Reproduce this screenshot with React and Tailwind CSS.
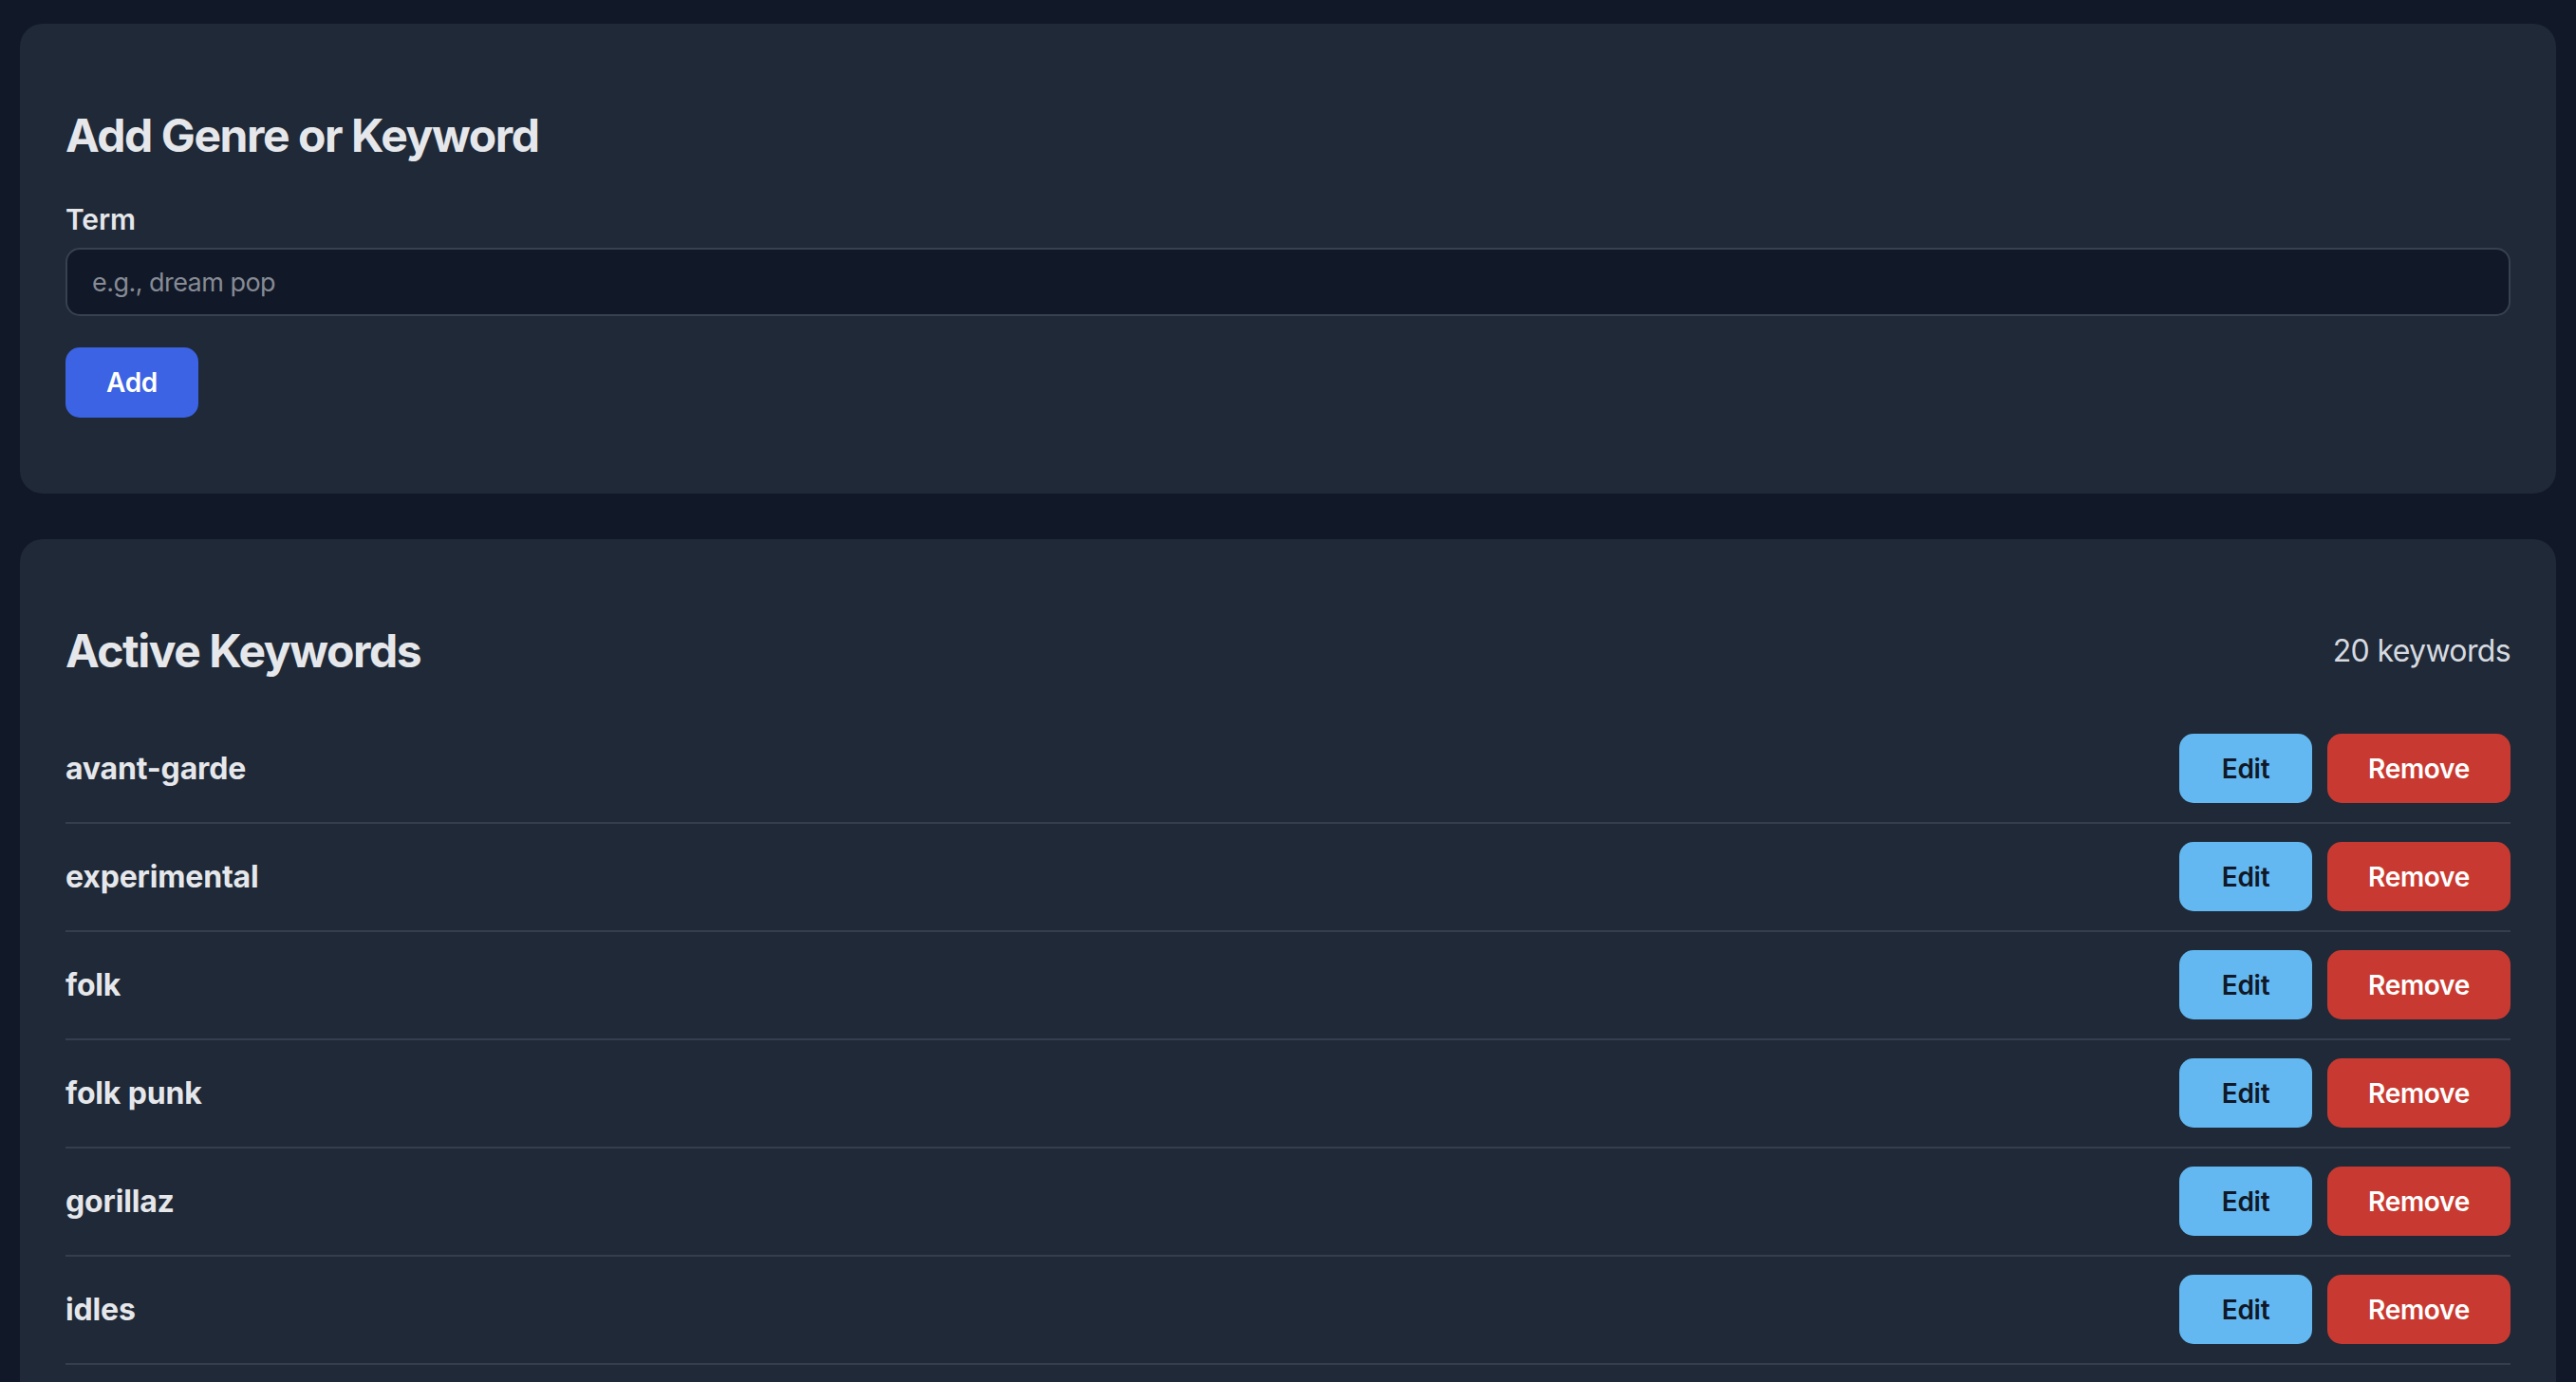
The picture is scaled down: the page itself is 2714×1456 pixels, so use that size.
import React from "react";

const keywords = [
  "avant-garde",
  "experimental",
  "folk",
  "folk punk",
  "gorillaz",
  "idles",
  "indie rock",
  "jazz",
  "krautrock",
  "lo-fi",
  "math rock",
  "noise rock",
  "post-punk",
  "post-rock",
  "psychedelic",
  "punk",
  "shoegaze",
  "slowcore",
  "synth-pop",
  "trip hop",
];

export default function App() {
  return (
    <div
      className="h-[1456px] overflow-hidden bg-[#111827] px-[21px] pt-[25px] flex flex-col gap-[48px]"
      style={{ fontFamily: "Inter, 'Noto Sans', sans-serif" }}
    >
      <section className="bg-[#1f2937] rounded-[24px] px-[48px] pt-[86px] pb-[80px] flex flex-col">
        <h2 className="text-[48px] leading-[64px] font-bold tracking-[-0.03em] text-[#e5e7eb]">
          Add Genre or Keyword
        </h2>
        <label className="mt-[36px] text-[30px] leading-[40px] font-semibold tracking-[-0.005em] text-[#e5e7eb]">
          Term
        </label>
        <input
          type="text"
          placeholder="e.g., dream pop"
          className="mt-[10px] h-[72px] w-full rounded-[15px] border-2 border-[#374151] bg-[#111827] px-[26px] text-[27px] tracking-[-0.02em] text-[#e5e7eb] placeholder:text-[#868b95] outline-none"
        />
        <button className="mt-[33px] h-[74px] w-[140px] rounded-[15px] bg-[#3b63e3] text-[28px] font-semibold tracking-[-0.01em] text-white">
          Add
        </button>
      </section>

      <section className="bg-[#1f2937] rounded-[24px] px-[48px] pt-[86px] pb-[80px] flex flex-col">
        <div className="flex items-center justify-between mb-[36px]">
          <h2 className="text-[48px] leading-[64px] font-bold tracking-[-0.03em] text-[#e5e7eb]">
            Active Keywords
          </h2>
          <span className="text-[32px] tracking-[-0.02em] text-[#d6dae0]">20 keywords</span>
        </div>
        <ul className="flex flex-col">
          {keywords.map((k) => (
            <li
              key={k}
              className="flex items-center justify-between pt-[19px] pb-[20px] border-b-2 border-[#343e4f]"
            >
              <span className="text-[32px] font-bold tracking-[-0.005em] text-[#e5e7eb]">{k}</span>
              <div className="flex items-center gap-[16px]">
                <button className="h-[73px] w-[140px] rounded-[15px] bg-[#63b8f1] text-[28px] font-semibold tracking-[-0.01em] text-[#111827]">
                  Edit
                </button>
                <button className="h-[73px] w-[193px] rounded-[15px] bg-[#c83a31] text-[28px] font-semibold tracking-[-0.01em] text-white">
                  Remove
                </button>
              </div>
            </li>
          ))}
        </ul>
      </section>
    </div>
  );
}
